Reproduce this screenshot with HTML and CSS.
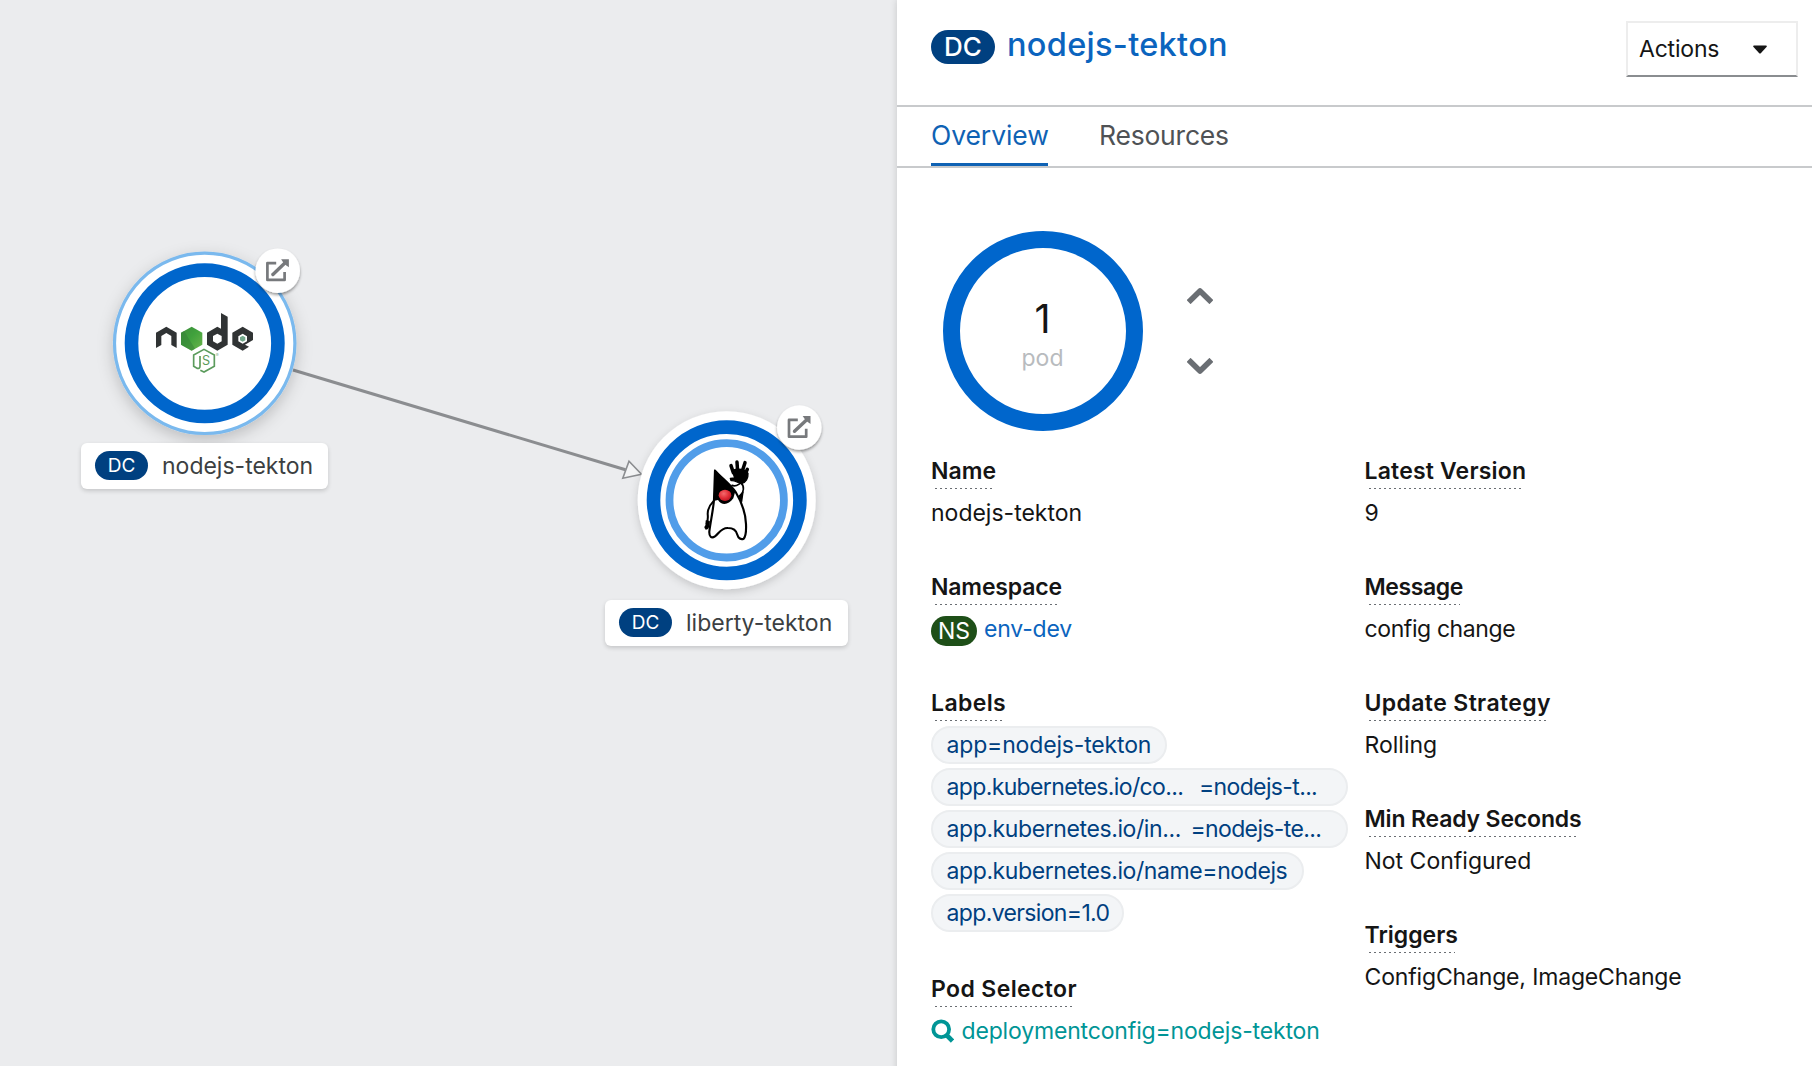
FILE: index.html
```html
<!DOCTYPE html>
<html lang="en">
<head>
<meta charset="utf-8">
<title>Topology</title>
<link rel="stylesheet" href="styles.css">
</head>
<body>
<main class="app">
  <section class="canvas">
    <svg class="graph" viewBox="0 0 897 1066" width="897" height="1066">
      <defs>
        <filter id="shadow" x="-20%" y="-20%" width="140%" height="150%"><feDropShadow dx="0" dy="3" stdDeviation="4" flood-color="#030303" flood-opacity=".16"/></filter>
        <filter id="shadowActive" x="-25%" y="-25%" width="150%" height="160%"><feDropShadow dx="0" dy="5" stdDeviation="8" flood-color="#030303" flood-opacity=".2"/></filter>
        <filter id="shadowSmall" x="-25%" y="-25%" width="150%" height="160%"><feDropShadow dx="0" dy="2" stdDeviation="1.6" flood-color="#030303" flood-opacity=".4"/></filter>
        <linearGradient id="leaf" x1="0" y1="0" x2="1" y2="1"><stop offset="0" stop-color="#3f8b3d"/><stop offset=".45" stop-color="#3fa13c"/><stop offset="1" stop-color="#6cb54c"/></linearGradient>
        <radialGradient id="nose" cx=".4" cy=".35" r=".7"><stop offset="0" stop-color="#f4696c"/><stop offset=".6" stop-color="#e02b35"/><stop offset="1" stop-color="#b31422"/></radialGradient>
        <g id="open">
          <circle r="22.3" fill="#fff" filter="url(#shadowSmall)"/>
          <path d="M-1.5 -7.6H-10.3V9.2H6.9V1.2" fill="none" stroke="#77797c" stroke-width="2.7" stroke-linejoin="round"/>
          <path d="M-4.8 3.8L7.2 -7.6" stroke="#77797c" stroke-width="3.4" stroke-linecap="round"/>
          <path d="M3.4 -11.4H11.2V-3.4L8.4 -5.4L5.4 -8.4Z" fill="#77797c"/>
        </g>
      </defs>

      <path d="M293 370L625.5 469.7" stroke="#8b8d90" stroke-width="3"/>
      <path d="M641.5 474.3L629 461.3L622.8 478.2Z" fill="#f3f4f5" stroke="#8b8d90" stroke-width="1.6"/>

      <g>
        <circle cx="204.7" cy="343.3" r="90.2" fill="#fff" stroke="#7ab9ee" stroke-width="3.2" filter="url(#shadowActive)"/>
        <circle cx="204.7" cy="343.3" r="73.2" fill="#fff" stroke="#06c" stroke-width="13.6"/>
        <g transform="translate(70 230) scale(.33333)">
          <path d="M258 354V308L289 290L320 308V354L304 345V318L289 309L274 318V345Z" fill="#303334"/>
          <path d="M365 290L397 308V344L365 362L333 344V308Z" fill="url(#leaf)"/>
          <path d="M333 308L342 303L375 356L365 362L333 344Z" fill="#357f38" opacity=".5"/>
          <path fill-rule="evenodd" d="M453 249L473 260V344L442 362L411 344V308L442 290L453 296ZM442 311L429 318V334L442 341L455 334V318Z" fill="#303334"/>
          <path fill-rule="evenodd" d="M518 290L549 308V330L525 344L537 350L518 362L487 344V308ZM518 311L505 318.500V333.500L518 341L531 333.500V318.500Z" fill="#303334"/>
          <path d="M518 317L526 321.500V330.500L518 335L510 330.500V321.500Z" fill="#72a78a"/>
          <path d="M391 421L402 426L433 409V375L402 358L371 375V409L381 415Q390 417 390 408V378" fill="none" stroke="#5b9b5c" stroke-width="5"/>
          <text class="logo-s" x="396" y="406">S</text>
          <text class="logo-r" x="437" y="381">®</text>
        </g>
        <use href="#open" x="277.7" y="270.7"/>
      </g>

      <g>
        <circle cx="726.7" cy="500.3" r="89" fill="#fff" filter="url(#shadow)"/>
        <circle cx="726.7" cy="500.3" r="73.2" fill="#fff" stroke="#06c" stroke-width="13.6"/>
        <circle cx="726.7" cy="500.3" r="57.2" fill="#fff" stroke="#519de9" stroke-width="7.8"/>
        <g transform="translate(590 390) scale(.33333)" stroke-linecap="round" stroke-linejoin="round">
          <path d="M370 334C358 346 353 360 353 372Q355 388 350 400" fill="none" stroke="#000" stroke-width="6"/>
          <path d="M349 392L359 394L357 410Q354 419 347 418Q341 411 347 406Z" fill="#000" stroke="#000" stroke-width="2"/>
          <path d="M426 286C438 292 446 282 453 279C464 288 462 306 450 321" fill="#fff" stroke="#000" stroke-width="5"/>
          <path d="M448 318L459 306L455 334Z" fill="#000" stroke="#000" stroke-width="4"/>
          <path d="M375 242C395 264 422 284 437 306C456 338 467 372 468 402C469 425 467 440 461 446C453 450 445 445 442 434C438 418 428 414 414 414C392 413 386 432 375 439C364 446 357 440 358 424C363 388 369 362 372 330Z" fill="#fff" stroke="#000" stroke-width="6.5"/>
          <path d="M374 238C395 262 420 280 436 304L430 325C415 346 395 347 384 330L371 333Z" fill="#000"/>
          <ellipse cx="405" cy="316" rx="19" ry="17" fill="url(#nose)"/>
          <path d="M430 248L423 227M443 246L441 216M456 246L465 218M464 256L472 238" fill="none" stroke="#000" stroke-width="10.500"/>
          <path d="M427 242C444 234 466 238 474 250C475 264 468 279 454 281C441 278 434 270 423 272L421 265L434 264Z" fill="#000" stroke="#000" stroke-width="4"/>
        </g>
        <use href="#open" x="799.3" y="427.5"/>
      </g>
    </svg>
    <div class="node-label node-label-a"><span class="badge badge-sm">DC</span><span>nodejs-tekton</span></div>
    <div class="node-label node-label-b"><span class="badge badge-sm">DC</span><span>liberty-tekton</span></div>
  </section>

  <aside class="panel">
    <header class="head">
      <h1 class="title"><span class="badge badge-lg">DC</span><a>nodejs-tekton</a></h1>
      <button class="actions"><span>Actions</span><svg width="14" height="9" viewBox="0 0 14 9"><path d="M1 .5H13Q14.300 .7 13.500 2L8 8Q7 9 6 8L.5 2Q-.3 .7 1 .5Z" fill="#151515"/></svg></button>
    </header>
    <nav class="tabs"><a class="tab active">Overview</a><a class="tab">Resources</a></nav>
    <div class="pods">
      <div class="donut"><b>1</b><span>pod</span></div>
      <div class="scale">
        <svg width="26" height="17" viewBox="0 0 26 17"><path d="M3.600 13.200L13 4L22.400 13.200" fill="none" stroke="#6a6e73" stroke-width="5.600" stroke-linejoin="round" stroke-linecap="square"/></svg>
        <svg width="26" height="17" viewBox="0 0 26 17"><path d="M3.600 3.800L13 13L22.400 3.800" fill="none" stroke="#6a6e73" stroke-width="5.600" stroke-linejoin="round" stroke-linecap="square"/></svg>
      </div>
    </div>
    <div class="details">
      <dl class="col">
        <div><dt>Name</dt><dd>nodejs-tekton</dd></div>
        <div><dt class="t1">Namespace</dt><dd class="ns"><span class="badge badge-ns">NS</span><a class="t1">env-dev</a></dd></div>
        <div><dt class="w2">Labels</dt>
          <dd class="chips">
            <span class="chip t1">app=nodejs-tekton</span>
            <span class="chip split t3"><span class="key">app.kubernetes.io/co...</span><span>=nodejs-t...</span></span>
            <span class="chip split-b t3"><span class="key t2">app.kubernetes.io/in...</span><span>=nodejs-te...</span></span>
            <span class="chip t2">app.kubernetes.io/name=nodejs</span>
            <span class="chip t3">app.version=1.0</span>
          </dd></div>
        <div><dt class="w2">Pod Selector</dt><dd class="selector t1"><svg width="23" height="24" viewBox="0 0 23 24"><circle cx="10.200" cy="10.300" r="7.900" fill="none" stroke="#009596" stroke-width="3.800"/><path d="M15.500 16L21.500 22" stroke="#009596" stroke-width="4.600"/></svg>deploymentconfig=nodejs-tekton</dd></div>
      </dl>
      <dl class="col">
        <div><dt class="w1">Latest Version</dt><dd>9</dd></div>
        <div><dt class="t2">Message</dt><dd class="t2">config change</dd></div>
        <div><dt class="w2">Update Strategy</dt><dd>Rolling</dd></div>
        <div><dt class="t1">Min Ready Seconds</dt><dd>Not Configured</dd></div>
        <div><dt>Triggers</dt><dd class="t1">ConfigChange, ImageChange</dd></div>
      </dl>
    </div>
  </aside>
</main>
</body>
</html>
```
FILE: styles.css
```css
* { box-sizing: border-box; }
body { margin: 0; font: 23px/42px Inter, "Noto Sans", sans-serif; color: #151515; background: #fff; }
dl, dd, h1 { margin: 0; }
.app { display: grid; grid-template-columns: 897px 1fr; height: 1066px; overflow: hidden; }

.w1 { letter-spacing: .18px; }
.w2 { letter-spacing: .38px; }
.t1 { letter-spacing: -.16px; }
.t2 { letter-spacing: -.4px; }
.t3 { letter-spacing: -.64px; }

/* topology canvas */
.canvas { position: relative; background: #ebecee; }
.graph { display: block; }
.logo-s { font: 38px Inter, sans-serif; fill: #5b9b5c; }
.logo-r { font: 13px Inter, sans-serif; fill: #8db38e; }
.node-label { position: absolute; display: flex; align-items: center; gap: 14px; height: 46px; padding-left: 14px; background: #fff; border-radius: 6px; color: #3c3f42; box-shadow: 0 2px 4px rgba(3, 3, 3, .16); white-space: nowrap; }
.node-label-a { left: 81px; top: 443px; width: 247px; }
.node-label-b { left: 605px; top: 600px; width: 243px; }

.badge { display: inline-flex; align-items: center; justify-content: center; flex: none; color: #fff; background: #004080; border-radius: 20px; letter-spacing: 0; }
.badge-sm { width: 53px; height: 29px; margin-top: -1px; font-size: 19px; line-height: 29px; }
.badge-lg { width: 64px; height: 34px; font-size: 26px; line-height: 34px; font-weight: 500; }
.badge-ns { width: 46px; height: 30px; font-size: 23px; line-height: 30px; background: #1e4f18; }

/* side panel */
.panel { position: relative; background: #fff; box-shadow: 0 0 7px rgba(3, 3, 3, .16); }
.head { display: flex; justify-content: space-between; align-items: flex-start; height: 107px; padding: 21px 14px 0 34px; border-bottom: 2px solid #c8cacc; }
.title { display: flex; align-items: center; gap: 12px; font-size: 32.500px; font-weight: 500; line-height: 48px; letter-spacing: .3px; color: #0b64be; }
.title .badge { margin-top: 4px; }
.actions { display: flex; align-items: center; gap: 34px; width: 172px; height: 56px; padding: 0 0 0 11px; font: inherit; letter-spacing: -.2px; color: #151515; background: #fff; border: 2px solid #ededed; border-bottom-color: #8a8d90; }
.tabs { display: flex; gap: 51px; height: 61px; padding-left: 34px; border-bottom: 2px solid #c8cacc; font-size: 26.500px; }
.tab { height: 59px; line-height: 57px; color: #4f5255; letter-spacing: -.22px; }
.tab.active { color: #0f62b4; border-bottom: 3px solid #0f62b4; letter-spacing: -.08px; width: 117px; }

.pods { display: flex; align-items: center; gap: 44px; padding: 63px 0 0 45.500px; }
.donut { display: flex; flex-direction: column; align-items: center; width: 200px; height: 200px; border: 17px solid #06c; border-radius: 50%; padding-top: 46px; }
.donut b { font-size: 39.500px; font-weight: 400; line-height: 50px; }
.donut span { line-height: 32px; margin-top: -2.500px; color: #b8bbbe; }
.scale { display: flex; flex-direction: column; gap: 54px; margin-top: -1px; }
.scale svg { display: block; }

.details { display: grid; grid-template-columns: 433.500px 1fr; padding: 18.500px 0 0 34px; }
.col > div { height: 116px; }
.col > div:nth-child(3):has(.chips) { height: 286px; }
dt { position: relative; width: max-content; height: 42px; font-weight: 600; }
dt::after { content: ""; position: absolute; left: 4px; right: 3px; bottom: 3px; height: 1px; background: repeating-linear-gradient(90deg, #6a6e73 0 2px, transparent 2px 5px); }
dd { height: 42px; white-space: nowrap; }
.ns { display: flex; gap: 7px; color: #0b64be; }
.ns .badge { margin-top: 8.500px; }
.chips { display: flex; flex-direction: column; align-items: flex-start; gap: 4px; height: auto; padding-top: 2.500px; }
.chip { height: 38px; padding: 0 13.500px; line-height: 34px; border: 2px solid #ebedef; border-radius: 19px; background: #f3f5f7; color: #004080; }
.chips .chip:nth-child(1) { width: 236px; }
.chips .chip:nth-child(4) { width: 373px; }
.chips .chip:nth-child(5) { width: 193px; }
.split, .split-b { display: flex; width: 417px; }
.split .key { width: 252.500px; }
.split-b .key { width: 244px; }
.selector { display: flex; align-items: center; gap: 7.500px; color: #009596; }
.selector svg { margin-top: 1px; }
```
